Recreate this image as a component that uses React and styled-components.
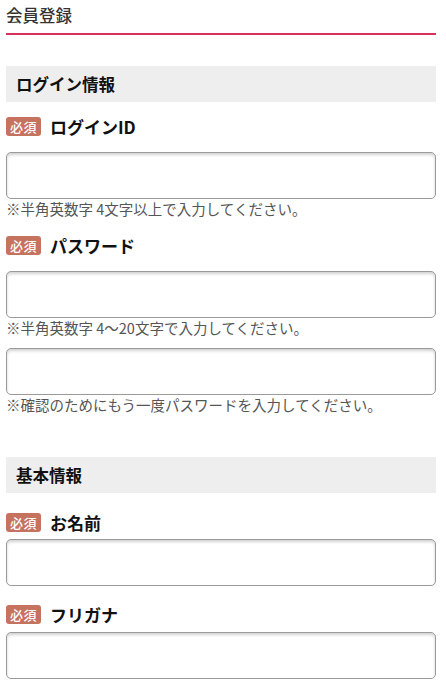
import React from 'react';
import styled, { createGlobalStyle } from 'styled-components';

const GlobalStyle = createGlobalStyle`
  body {
    margin: 0;
    background: #fff;
    font-family: "Noto Sans CJK JP", "Noto Sans", sans-serif;
    color: #222;
  }
`;

const Page = styled.div`
  padding: 0 10px 0 6px;
`;

const Title = styled.h1`
  margin: 0;
  padding: 3px 0 6px;
  font-size: 16.5px;
  line-height: 24px;
  font-weight: 500;
  color: #333;
  border-bottom: 2px solid #d7335a;
`;

const SectionHead = styled.h2`
  margin: ${({ top }) => top}px 0 0;
  height: 36px;
  padding-left: 10px;
  background: #eeeeee;
  font-size: 16.5px;
  line-height: 36px;
  font-weight: 700;
  color: #111;
`;

const LabelRow = styled.div`
  display: flex;
  align-items: center;
  margin-top: ${({ top }) => top}px;
  height: 19px;
`;

const Badge = styled.span`
  display: inline-flex;
  align-items: center;
  justify-content: center;
  width: 35px;
  height: 19px;
  border-radius: 3px;
  background: #c5725f;
  color: #fff;
  font-size: 13px;
  font-weight: 500;
  letter-spacing: 0.5px;
`;

const LabelText = styled.span`
  margin-left: 9px;
  font-size: 17px;
  font-weight: 700;
  color: #111;
`;

const Input = styled.input`
  display: block;
  box-sizing: border-box;
  width: 100%;
  height: 47px;
  margin-top: ${({ top }) => top}px;
  border: 1px solid #9a9a9a;
  border-radius: 5px;
  box-shadow: inset 0 2px 3px rgba(0, 0, 0, 0.18);
  background: #fff;
  outline: none;
`;

const Hint = styled.p`
  margin: 0;
  font-size: 14.5px;
  line-height: 20px;
  height: 20px;
  color: #555;
  white-space: nowrap;
`;

export default function App() {
  return (
    <Page>
      <GlobalStyle />
      <Title>会員登録</Title>

      <SectionHead top={31}>ログイン情報</SectionHead>

      <LabelRow top={15}>
        <Badge>必須</Badge>
        <LabelText>ログインID</LabelText>
      </LabelRow>
      <Input top={16} type="text" />
      <Hint>※半角英数字 4文字以上で入力してください。</Hint>

      <LabelRow top={17}>
        <Badge>必須</Badge>
        <LabelText>パスワード</LabelText>
      </LabelRow>
      <Input top={16} type="password" />
      <Hint>※半角英数字 4〜20文字で入力してください。</Hint>
      <Input top={10} type="password" />
      <Hint>※確認のためにもう一度パスワードを入力してください。</Hint>

      <SectionHead top={42}>基本情報</SectionHead>

      <LabelRow top={20}>
        <Badge>必須</Badge>
        <LabelText>お名前</LabelText>
      </LabelRow>
      <Input top={7} type="text" />

      <LabelRow top={19}>
        <Badge>必須</Badge>
        <LabelText>フリガナ</LabelText>
      </LabelRow>
      <Input top={8} type="text" />
    </Page>
  );
}
